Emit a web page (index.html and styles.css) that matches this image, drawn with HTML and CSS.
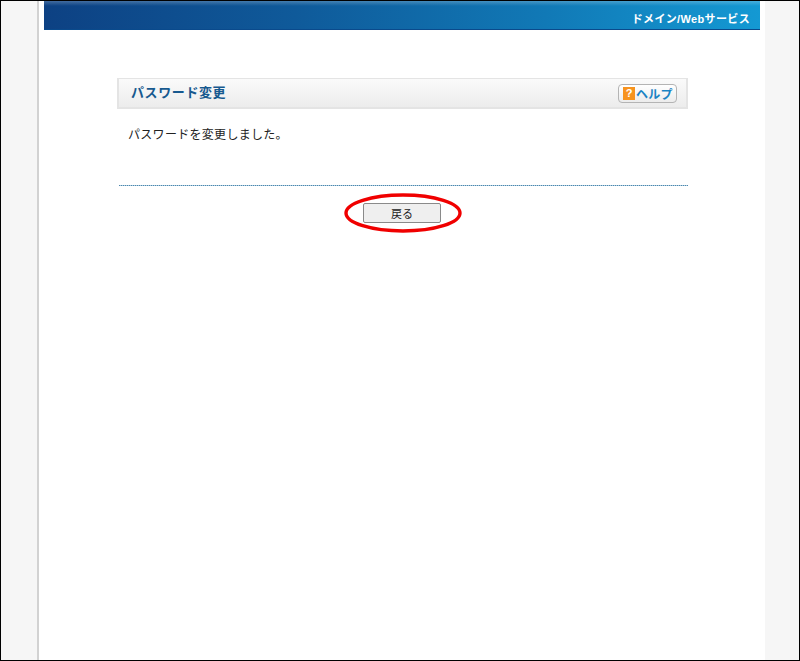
FILE: index.html
```html
<!DOCTYPE html>
<html lang="ja">
<head>
<meta charset="utf-8">
<title>パスワード変更</title>
<link rel="stylesheet" href="styles.css">
</head>
<body>
<div class="frame">
  <div class="page">
    <header class="banner"><span class="banner-text">ドメイン/Webサービス</span></header>
    <main class="content">
      <div class="title-bar">
        <h1 class="title">パスワード変更</h1>
        <a class="help"><span class="help-icon">?</span><span class="help-text">ヘルプ</span></a>
      </div>
      <p class="message">パスワードを変更しました。</p>
      <div class="rule"></div>
      <div class="actions">
        <button class="back">戻る</button>
        <svg class="ring" width="120" height="42" viewBox="0 0 120 42"><ellipse cx="60" cy="21" rx="57" ry="18" fill="none" stroke="#f00000" stroke-width="3.4"/></svg>
      </div>
    </main>
  </div>
</div>
</body>
</html>
```
FILE: styles.css
```css
html, body { margin: 0; padding: 0; height: 100%; }
body { font-family: "Liberation Sans", "Noto Sans CJK JP", sans-serif; background: #fff; }
.frame {
  box-sizing: border-box; width: 800px; height: 661px; overflow: hidden;
  border: 1px solid #000; background: #f6f6f6; padding-left: 36px; padding-right: 34px;
}
.page {
  height: 100%; background: #fff; border-left: 2px solid #d2d2d2; padding: 0 5px;
  box-sizing: border-box; width: 728px;
}
.banner {
  height: 29px; box-sizing: border-box; width: 716px; display: flex; align-items: center; justify-content: flex-end;
  padding: 6px 10px 0 0;
  background:
    linear-gradient(to bottom, rgba(255,255,255,0.22), rgba(255,255,255,0) 5px),
    linear-gradient(to right, #0d4183 0%, #0f5a9a 35%, #1179b6 70%, #1499d3 100%);
  border-bottom: 1px solid #0a4a8c;
}
.banner-text { color: #fff; font-size: 11px; font-weight: bold; letter-spacing: 0.35px; }
.content { padding: 48px 0 0 73px; width: 571px; }
.title-bar {
  box-sizing: border-box; height: 31px; width: 571px; display: flex; align-items: center; justify-content: space-between;
  padding: 0 9px 0 12px; border: 2px solid #e4e4e4; border-top-width: 1px;
  background: linear-gradient(to bottom, #fafafa, #ececec);
}
.title { margin: 0 0 3px; font-size: 13px; font-weight: bold; color: #17598f; letter-spacing: 0.6px; }
.help {
  box-sizing: border-box; width: 59px; height: 19px; display: flex; align-items: center; gap: 1px; padding-left: 4px;
  border: 1px solid #b4b4b4; border-radius: 4px; background: linear-gradient(to bottom, #ffffff, #ececec);
}
.help-icon {
  width: 12px; height: 13px; background: #f7931e; color: #fff; font-size: 11px; font-weight: bold;
  display: flex; align-items: center; justify-content: center;
}
.help-text { color: #1a83c4; font-size: 12px; font-weight: bold; letter-spacing: 0.3px; }
.message { margin: 0; padding: 18px 0 0 11px; height: 58px; font-size: 12px; line-height: 17px; color: #222; letter-spacing: 0.3px; }
.rule { margin-left: 2px; height: 1px; background: repeating-linear-gradient(to right, #4f86ac 0 1px, #a9cde0 1px 2px); }
.actions { position: relative; display: flex; justify-content: center; padding-top: 17px; padding-right: 1px; }
.back {
  box-sizing: border-box; width: 78px; height: 20px; padding: 0; font: 11px "Liberation Sans", "Noto Sans CJK JP", sans-serif; color: #222;
  background: #efefef; border: 1px solid #8a8a8a; border-radius: 2px;
}
.ring { position: absolute; left: 226px; top: 6px; }
```
